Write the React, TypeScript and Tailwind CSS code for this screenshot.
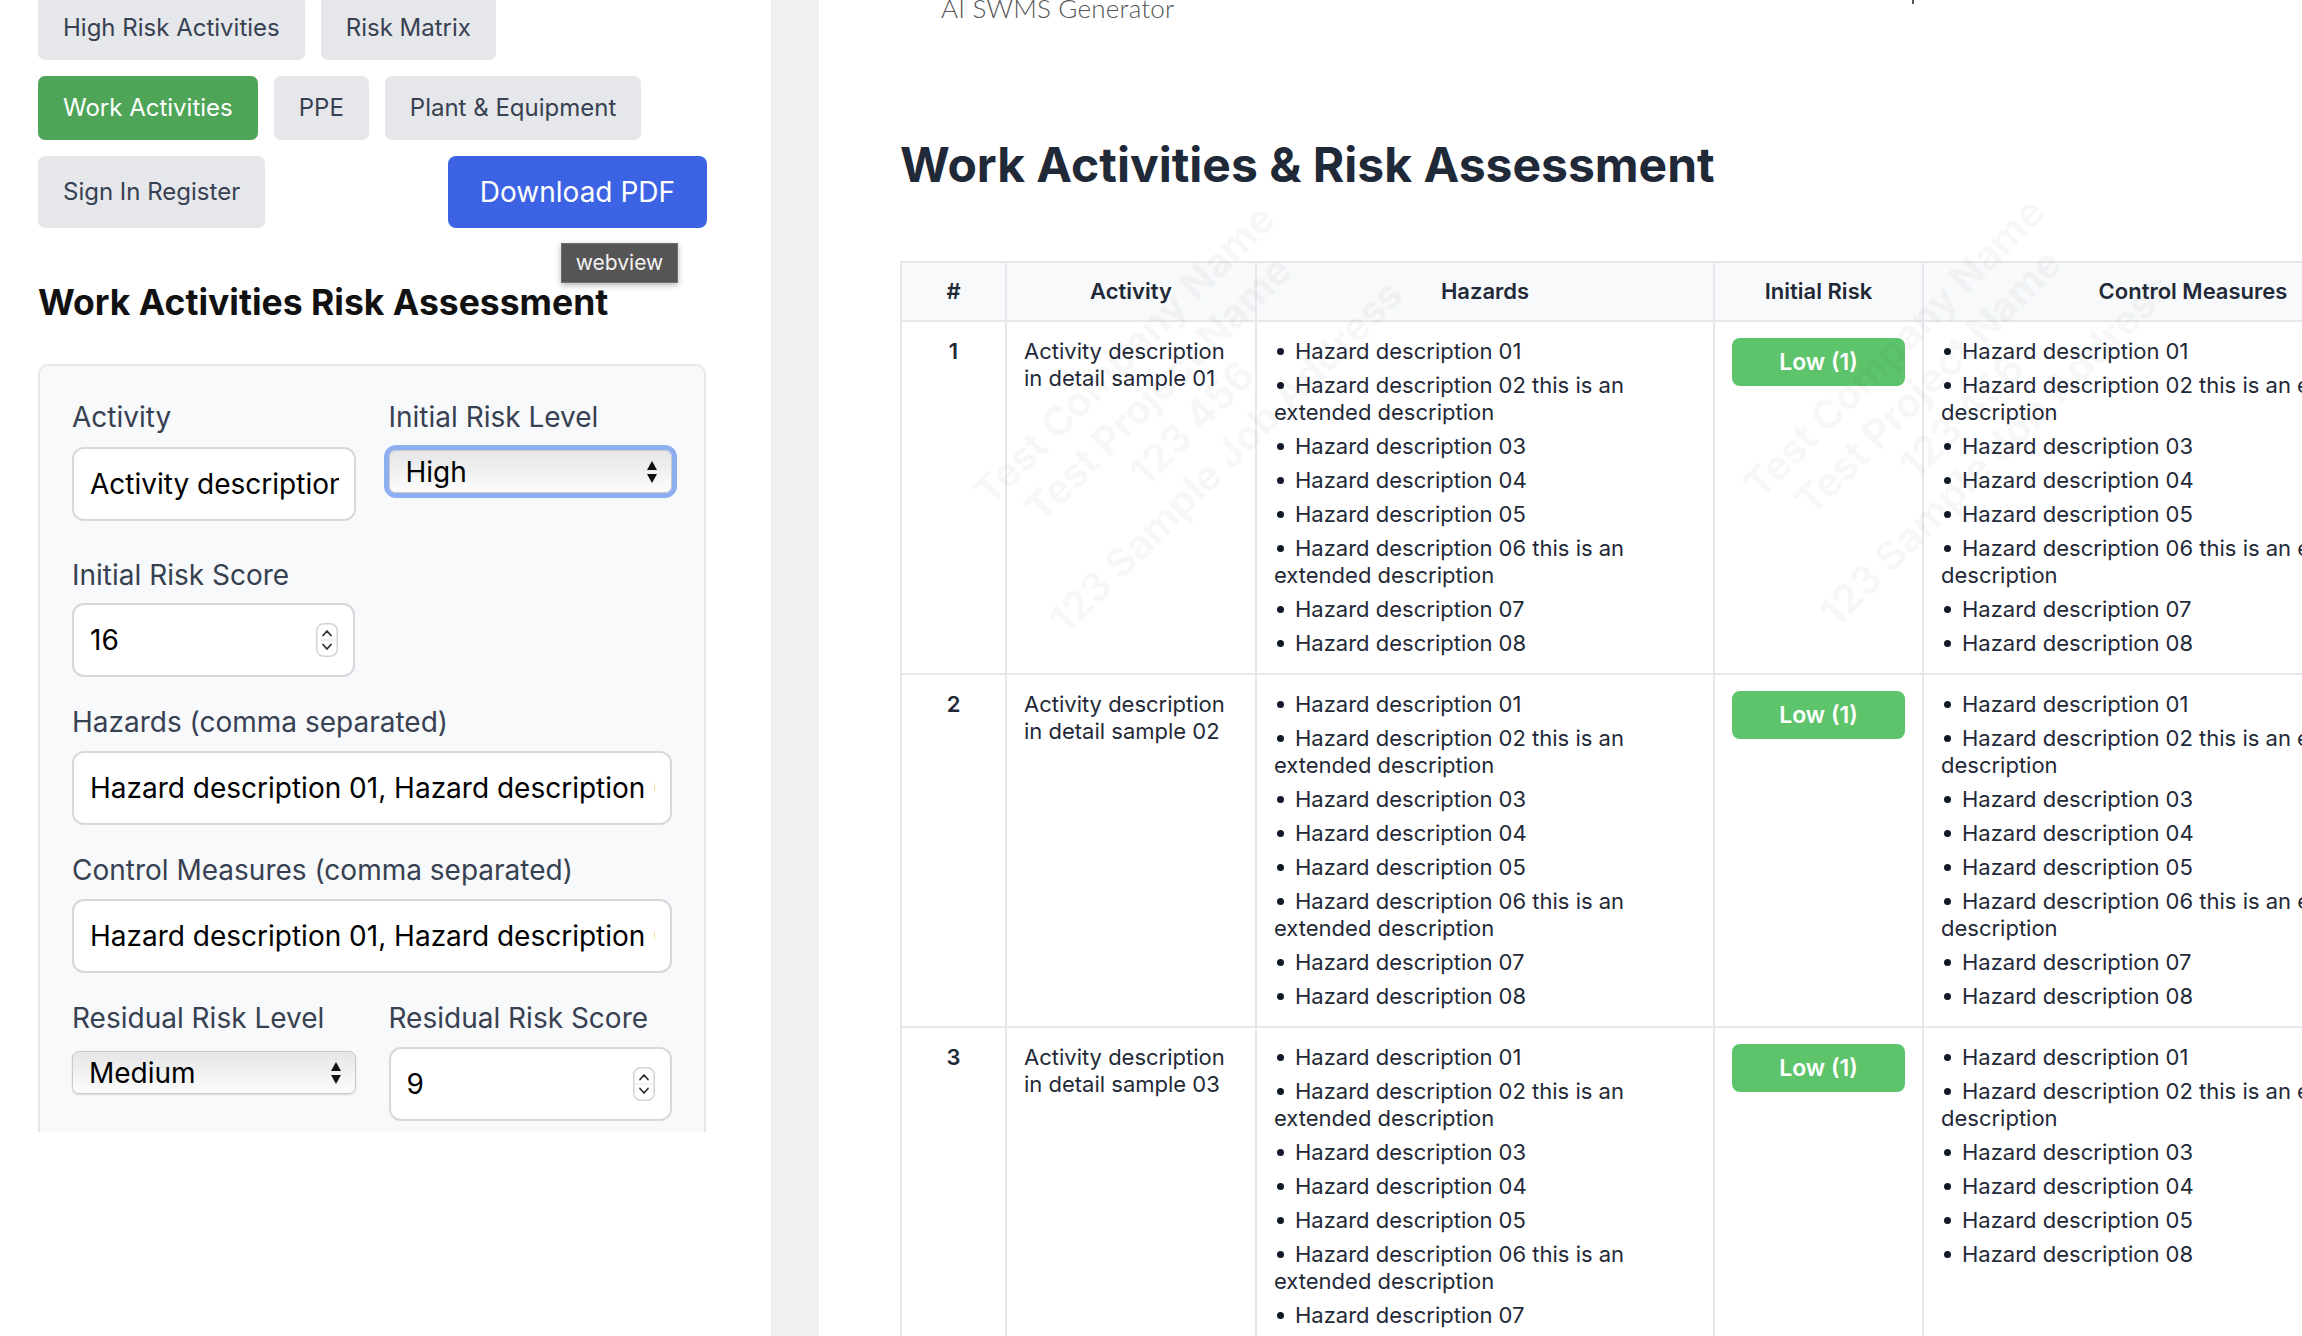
import React from 'react';

const hazards = [
  'Hazard description 01',
  'Hazard description 02 this is an extended description',
  'Hazard description 03',
  'Hazard description 04',
  'Hazard description 05',
  'Hazard description 06 this is an extended description',
  'Hazard description 07',
  'Hazard description 08',
];

const rows = [
  { id: 1, activity: 'Activity description in detail sample 01', hazards, controls: hazards },
  { id: 2, activity: 'Activity description in detail sample 02', hazards, controls: hazards },
  {
    id: 3,
    activity: 'Activity description in detail sample 03',
    hazards,
    controls: [hazards[0], hazards[1], hazards[2], hazards[3], hazards[4], hazards[7]],
  },
];

function GrayButton({ label }: { label: string }) {
  return (
    <button className="flex items-center rounded-[7px] bg-[#e5e7eb] px-[25px] text-[24px] leading-[32px] text-[#374151]">
      {label}
    </button>
  );
}

function Spinner() {
  return (
    <svg width="22" height="34" viewBox="0 0 22 34" className="shrink-0">
      <rect x="0.75" y="0.75" width="20.5" height="32.5" rx="7" fill="#fff" stroke="#d4d4d8" strokeWidth="1.5" />
      <line x1="1.5" y1="17" x2="20.5" y2="17" stroke="#e4e4e7" strokeWidth="1" />
      <path d="M7 12.5 L11 8 L15 12.5" fill="none" stroke="#2d2d2d" strokeWidth="1.7" strokeLinecap="round" strokeLinejoin="round" />
      <path d="M7 21.5 L11 26 L15 21.5" fill="none" stroke="#2d2d2d" strokeWidth="1.7" strokeLinecap="round" strokeLinejoin="round" />
    </svg>
  );
}

function SelectArrows() {
  return (
    <svg width="12" height="26" viewBox="0 0 12 26" className="shrink-0">
      <path d="M1 11 L6 2 L11 11 Z" fill="#111" />
      <path d="M1 15 L11 15 L6 24 Z" fill="#111" />
    </svg>
  );
}

function Label({ children, className = '' }: { children: React.ReactNode; className?: string }) {
  return <div className={`text-[28px] leading-[34px] text-[#374151] ${className}`}>{children}</div>;
}

function TextField({ value, number }: { value: string; number?: boolean }) {
  return (
    <div className="flex h-[74px] items-center gap-3 rounded-[12px] border-2 border-[#d6d8dc] bg-white pl-[16px] pr-[15px] text-[28px] text-black">
      <span className="block min-w-0 flex-1 overflow-hidden whitespace-nowrap">{value}</span>
      {number && <Spinner />}
    </div>
  );
}

function SelectField({ value, focused }: { value: string; focused?: boolean }) {
  return (
    <div
      className={`flex h-[43px] items-center justify-between rounded-[7px] border border-[#c9c9cc] bg-gradient-to-b from-[#e6e6e8] to-[#fcfcfc] pl-[16px] pr-[13px] text-[28px] text-black shadow-[0_1px_2px_rgba(0,0,0,0.15)] ${
        focused ? 'ring-[5px] ring-[#8eaef2]' : ''
      }`}
    >
      <span>{value}</span>
      <SelectArrows />
    </div>
  );
}

function BulletList({ items }: { items: string[] }) {
  return (
    <ul className="space-y-[7px]">
      {items.map((item, i) => (
        <li key={i}>
          <span className="mb-[3px] ml-[3px] mr-[11px] inline-block h-[7px] w-[7px] rounded-full bg-[#111827] align-middle" />
          {item}
        </li>
      ))}
    </ul>
  );
}

function Watermark({ left, top }: { left: number; top: number }) {
  return (
    <div
      className="absolute -translate-x-1/2 -translate-y-1/2 -rotate-45 whitespace-nowrap text-center text-[40px] leading-[48px] font-bold text-[#0f172a]/[0.045]"
      style={{ left, top }}
    >
      <div>Test Company Name</div>
      <div>Test Project Name</div>
      <div>123 456</div>
      <div>123 Sample Job Address</div>
    </div>
  );
}

const cell = 'border-2 border-[#e5e7eb] px-[17px] py-[16px] align-top';
const headCell = 'border-2 border-[#e5e7eb] px-[17px] py-[15px] text-center font-semibold';

export default function App() {
  return (
    <div className="flex h-[1336px] w-[2302px] overflow-hidden bg-white font-[Inter,'Liberation_Sans',sans-serif] antialiased">
      {/* Editor side */}
      <aside className="relative h-[1132px] w-[771px] shrink-0 overflow-hidden">
        <div className="ml-[38px] mt-[-4px] w-[669px]">
          <div className="flex h-[64px] gap-4">
            <GrayButton label="High Risk Activities" />
            <GrayButton label="Risk Matrix" />
          </div>
          <div className="mt-4 flex h-[64px] gap-4">
            <button className="flex items-center rounded-[7px] bg-[#4ea457] px-[25px] text-[24px] leading-[32px] text-white">
              Work Activities
            </button>
            <GrayButton label="PPE" />
            <GrayButton label="Plant & Equipment" />
          </div>
          <div className="mt-4 flex h-[72px] justify-between">
            <GrayButton label="Sign In Register" />
            <button className="flex items-center rounded-[8px] bg-[#3c63e4] px-8 text-[28px] leading-[36px] text-white">
              Download PDF
            </button>
          </div>

          <h2 className="mt-[55px] text-[35.5px] leading-[40px] font-bold text-[#111]">Work Activities Risk Assessment</h2>

          <div className="mt-[41px] w-[668px] rounded-t-[10px] border-2 border-[#e5e7eb] bg-[#f8f9fb] px-[32px] pb-10 pt-[34px]">
            <div className="grid grid-cols-2 items-start gap-x-[33px]">
              <div>
                <Label>Activity</Label>
                <div className="mt-[13px]">
                  <TextField value="Activity description in detail sample 01" />
                </div>
              </div>
              <div>
                <Label>Initial Risk Level</Label>
                <div className="mt-[16px]">
                  <SelectField value="High" focused />
                </div>
              </div>
            </div>

            <Label className="mt-[37px]">Initial Risk Score</Label>
            <div className="mt-[11px] w-[283px]">
              <TextField value="16" number />
            </div>

            <Label className="mt-[28px]">Hazards (comma separated)</Label>
            <div className="mt-[12px]">
              <TextField value="Hazard description 01, Hazard description 02 this is an extended description, Hazard description 03" />
            </div>

            <Label className="mt-[28px]">Control Measures (comma separated)</Label>
            <div className="mt-[12px]">
              <TextField value="Hazard description 01, Hazard description 02 this is an extended description, Hazard description 03" />
            </div>

            <div className="mt-[28px] grid grid-cols-2 items-start gap-x-[33px]">
              <div>
                <Label>Residual Risk Level</Label>
                <div className="mt-[16px]">
                  <SelectField value="Medium" />
                </div>
              </div>
              <div>
                <Label>Residual Risk Score</Label>
                <div className="mt-[12px]">
                  <TextField value="9" number />
                </div>
              </div>
            </div>
          </div>
        </div>

        {/* hover tooltip */}
        <div className="absolute left-[561px] top-[243px] flex h-[40px] w-[117px] items-center justify-center border border-[#707070] bg-[#555] text-[21px] text-[#f2f2f2] shadow-[0_2px_6px_rgba(0,0,0,0.3)]">
          webview
        </div>
      </aside>

      <div className="w-[48px] shrink-0 bg-[#f0f0f2]" />

      {/* Preview side */}
      <main className="relative min-w-0 flex-1 overflow-hidden pl-[81px]">
        <span className="absolute left-[1093px] top-0 h-[4px] w-[2px] bg-[#555]" />
        <div className="ml-[41px] mt-[-4px] font-[Lato,sans-serif] text-[26px] leading-[24px] font-light tracking-[0.2px] text-[#555]">
          AI SWMS Generator
        </div>
        <h1 className="mt-[117px] text-[48px] leading-[56px] font-bold text-[#1f2937]">
          Work Activities &amp; Risk Assessment
        </h1>

        <div className="relative mt-[68px] w-max">
          <table className="w-[1782px] table-fixed border-collapse text-[22px] leading-[27px] text-[#1f2937]">
            <colgroup>
              <col className="w-[105px]" />
              <col className="w-[250px]" />
              <col className="w-[458px]" />
              <col className="w-[209px]" />
              <col className="w-[540px]" />
              <col className="w-[220px]" />
            </colgroup>
            <thead>
              <tr className="bg-[#f8f9fa]">
                <th className={headCell}>#</th>
                <th className={headCell}>Activity</th>
                <th className={headCell}>Hazards</th>
                <th className={headCell}>Initial Risk</th>
                <th className={headCell}>Control Measures</th>
                <th className={headCell}>Residual Risk</th>
              </tr>
            </thead>
            <tbody>
              {rows.map((row) => (
                <tr key={row.id}>
                  <td className={`${cell} text-center font-semibold`}>{row.id}</td>
                  <td className={cell}>{row.activity}</td>
                  <td className={cell}>
                    <BulletList items={row.hazards} />
                  </td>
                  <td className={cell}>
                    <div className="flex h-[48px] items-center justify-center rounded-[8px] bg-[#5dc46b] text-[23px] font-semibold text-white">
                      Low (1)
                    </div>
                  </td>
                  <td className={cell}>
                    <BulletList items={row.controls} />
                  </td>
                  <td className={cell}>
                    <div className="flex h-[48px] items-center justify-center rounded-[8px] bg-[#5dc46b] text-[23px] font-semibold text-white">
                      Low (1)
                    </div>
                  </td>
                </tr>
              ))}
            </tbody>
          </table>

          {/* faint watermark over the table */}
          <div className="pointer-events-none absolute inset-0">
            <Watermark left={275} top={145} />
            <Watermark left={1045} top={138} />
          </div>
        </div>
      </main>
    </div>
  );
}
